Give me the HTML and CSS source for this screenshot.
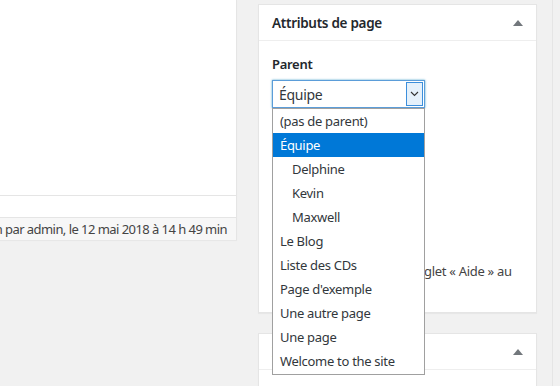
FILE: index.html
```html
<!DOCTYPE html>
<html lang="fr">
<head>
  <meta charset="UTF-8" />
  <title>Attributs de page</title>
  <link rel="stylesheet" href="styles.css">
</head>
<body>
  <div class="editor">
    <div class="editor-body"></div>
    <div class="editor-row"></div>
    <div class="editor-status">
      <span>Dernière modification par admin, le 12 mai 2018 à 14 h 49 min</span>
    </div>
  </div>

  <div class="sidebar">
    <div class="postbox">
      <div class="postbox-head">
        <h2>Attributs de page</h2>
        <span class="toggle"></span>
      </div>
      <div class="postbox-inside">
        <p class="field-label">Parent</p>
        <div class="select-wrap">
          <div class="select">
            <span>Équipe</span>
            <span class="select-arrow">
              <svg width="9" height="6" viewBox="0 0 9 6"><path d="M1 1l3.5 3.5L8 1" fill="none" stroke="#333" stroke-width="1.1"/></svg>
            </span>
          </div>
          <ul class="options">
            <li>(pas de parent)</li>
            <li class="selected">Équipe</li>
            <li class="child">Delphine</li>
            <li class="child">Kevin</li>
            <li class="child">Maxwell</li>
            <li>Le Blog</li>
            <li>Liste des CDs</li>
            <li>Page d'exemple</li>
            <li>Une autre page</li>
            <li>Une page</li>
            <li>Welcome to the site</li>
          </ul>
        </div>
        <p class="field-label">Ordre</p>
        <p class="help">Besoin d’aide ? Utilisez l’onglet « Aide » au dessus du titre de l’écran.</p>
      </div>
    </div>

    <div class="postbox">
      <div class="postbox-head">
        <h2>Image mise en avant</h2>
        <span class="toggle"></span>
      </div>
      <div class="postbox-inside"></div>
    </div>
  </div>

  <div class="edge"></div>
</body>
</html>
```

FILE: styles.css
```css
html {
  overflow: hidden;
}
body {
  margin: 0;
  height: 386px;
  overflow: hidden;
  background: #f1f1f1;
  font-family: "Noto Sans", "Open Sans", sans-serif;
  font-size: 13px;
  letter-spacing: -0.3px;
  color: #32373c;
  display: flex;
}
.editor {
  width: 236px;
  flex-shrink: 0;
  align-self: flex-start;
  background: #fff;
  border-right: 1px solid #e5e5e5;
  box-shadow: 0 1px 1px rgba(0, 0, 0, 0.04);
}
.editor-body {
  height: 195px;
  border-bottom: 1px solid #e5e5e5;
}
.editor-row {
  height: 21px;
  border-bottom: 1px solid #e5e5e5;
}
.editor-status {
  height: 22px;
  background: #f7f7f7;
  display: flex;
  justify-content: flex-end;
  align-items: center;
  padding-right: 9px;
  overflow: hidden;
  white-space: nowrap;
  letter-spacing: -0.55px;
  color: #444;
}
.sidebar {
  width: 279px;
  margin-left: 21px;
  padding-top: 4px;
  display: flex;
  flex-direction: column;
  gap: 20px;
}
.postbox {
  background: #fff;
  border: 1px solid #e5e5e5;
  box-shadow: 0 1px 1px rgba(0, 0, 0, 0.04);
}
.postbox-head {
  height: 35px;
  border-bottom: 1px solid #eee;
  display: flex;
  align-items: center;
  justify-content: space-between;
  padding: 0 12px 0 13px;
}
.postbox-head h2 {
  margin: 0;
  font-size: 13.5px;
  font-weight: 600;
  color: #23282d;
}
.toggle {
  width: 0;
  height: 0;
  border-left: 5px solid transparent;
  border-right: 5px solid transparent;
  border-bottom: 6px solid #72777c;
  margin-right: 1px;
}
.postbox-inside {
  padding: 8px 13px 5px;
  min-height: 40px;
}
.field-label {
  margin: 6px 0 7px;
  line-height: 18px;
  font-weight: 600;
  color: #23282d;
}
.help {
  margin: 127px 0 0;
  width: 256px;
  line-height: 24px;
  color: #444;
}
.select-wrap {
  position: relative;
}
.select {
  width: 145px;
  height: 26px;
  border: 1px solid #5b9dd9;
  box-shadow: 0 0 2px rgba(30, 140, 190, 0.8);
  display: flex;
  align-items: center;
  justify-content: space-between;
  padding-left: 6px;
  font-size: 14px;
  color: #32373c;
}
.select-arrow {
  width: 17px;
  height: 24px;
  margin-right: 1px;
  background: #e5f1fb;
  border: 1px solid #3c8fdc;
  display: flex;
  align-items: center;
  justify-content: center;
  box-sizing: border-box;
}
.options {
  position: absolute;
  top: 28px;
  left: 0;
  width: 151px;
  margin: 0;
  padding: 0 0 1px;
  list-style: none;
  background: #fff;
  border: 1px solid #a0a0a0;
  z-index: 2;
}
.options li {
  height: 24px;
  line-height: 24px;
  padding-left: 7px;
  color: #32373c;
}
.options li.child {
  padding-left: 19px;
}
.options li.selected {
  background: #0078d7;
  color: #fff;
}
.edge {
  width: 1px;
  margin-left: 15px;
  background: #e5e5e5;
}
```
